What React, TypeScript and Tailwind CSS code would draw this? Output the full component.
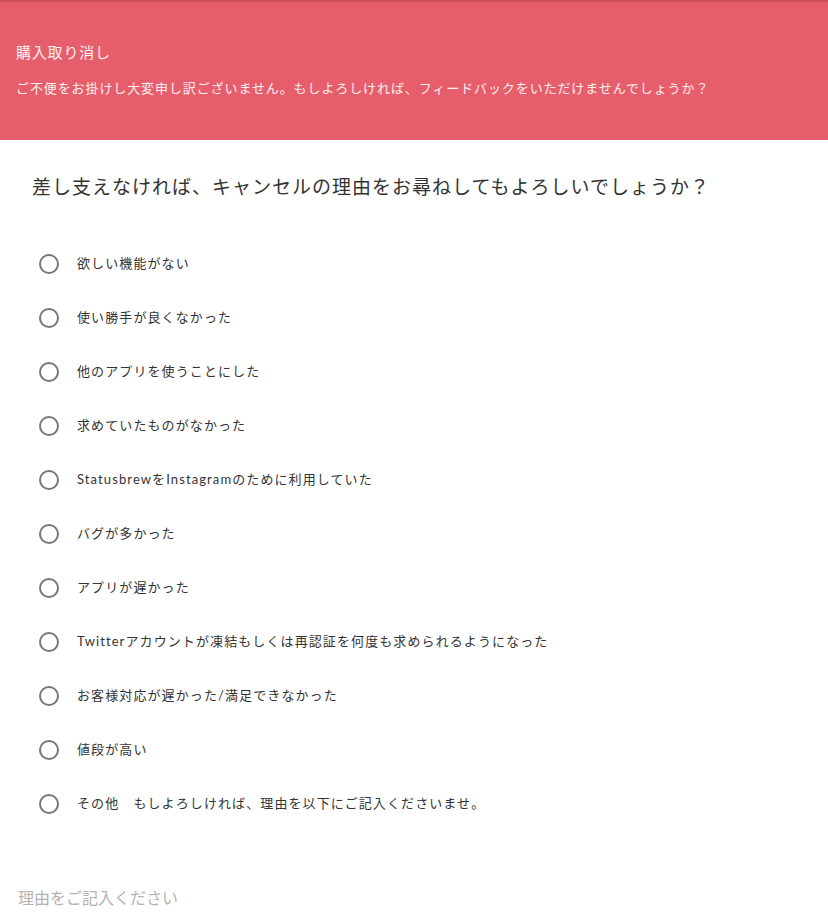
import React from "react";

const options = [
  "欲しい機能がない",
  "使い勝手が良くなかった",
  "他のアプリを使うことにした",
  "求めていたものがなかった",
  "StatusbrewをInstagramのために利用していた",
  "バグが多かった",
  "アプリが遅かった",
  "Twitterアカウントが凍結もしくは再認証を何度も求められるようになった",
  "お客様対応が遅かった/満足できなかった",
  "値段が高い",
  "その他　もしよろしければ、理由を以下にご記入くださいませ。",
];

export default function App() {
  return (
    <div
      className="w-[828px] h-[913px] overflow-hidden bg-white"
      style={{ fontFamily: 'Lato, "Noto Sans CJK JP", sans-serif' }}
    >
      <div className="h-[140px] bg-[#e65e6c] border-t-2 border-[#c94f5c] px-4 pt-[39px]">
        <div className="text-[15px] leading-[22px] tracking-[0.8px] text-white/90">購入取り消し</div>
        <div className="mt-[15px] text-[13px] leading-[20px] tracking-[0.9px] text-white/90">
          ご不便をお掛けし大変申し訳ございません。もしよろしければ、フィードバックをいただけませんでしょうか？
        </div>
      </div>
      <div className="px-8 pt-[34px]">
        <div className="text-[19px] leading-[26px] tracking-[1px] text-[#333]">
          差し支えなければ、キャンセルの理由をお尋ねしてもよろしいでしょうか？
        </div>
        <div className="mt-[54px] flex flex-col gap-[34px] pl-[7px]">
          {options.map((o) => (
            <label key={o} className="flex items-center h-[20px]">
              <span className="w-[20px] h-[20px] rounded-full border-2 border-[#777] shrink-0" />
              <span className="ml-[18px] text-[13px] tracking-[1.1px] text-[#333]">{o}</span>
            </label>
          ))}
        </div>
      </div>
      <div className="mt-[72px] px-[18px]">
        <input
          placeholder="理由をご記入ください"
          className="w-full text-[16px] leading-[24px] outline-none placeholder:text-[#b3b3b3]"
          style={{ fontFamily: 'Lato, "Noto Sans CJK JP", sans-serif' }}
        />
      </div>
    </div>
  );
}
